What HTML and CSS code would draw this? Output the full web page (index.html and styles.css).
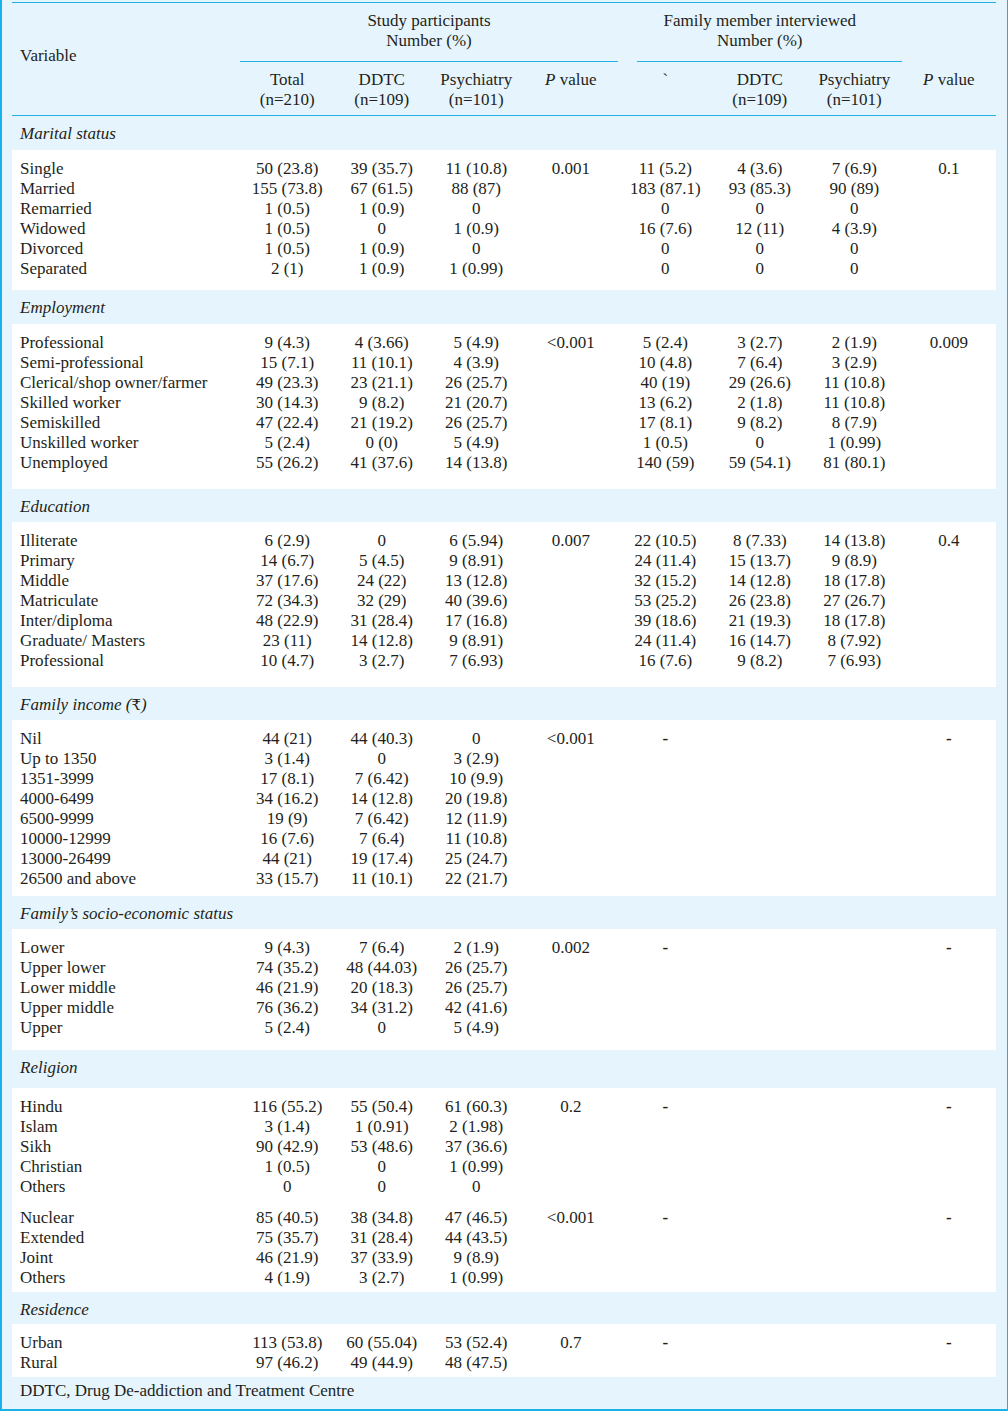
FILE: index.html
```html
<!DOCTYPE html>
<html lang="en">
<head>
<meta charset="utf-8">
<title>Socio-demographic profile</title>
<link rel="stylesheet" href="styles.css">
</head>
<body>
<div class="frame">
<table class="data">
<colgroup>
<col class="c-var">
<col class="c-num"><col class="c-num"><col class="c-num"><col class="c-num">
<col class="c-num"><col class="c-num"><col class="c-num"><col class="c-num">
</colgroup>
<thead>
<tr class="h1">
<th rowspan="2" class="var-head">Variable</th>
<th colspan="4" class="group study">Study participants<br>Number (%)</th>
<th colspan="3" class="group family">Family member interviewed<br>Number (%)</th>
<th></th>
</tr>
<tr class="h2">
<th>Total<br>(n=210)</th>
<th>DDTC<br>(n=109)</th>
<th>Psychiatry<br>(n=101)</th>
<th><i>P</i> value</th>
<th>`</th>
<th>DDTC<br>(n=109)</th>
<th>Psychiatry<br>(n=101)</th>
<th><i>P</i> value</th>
</tr>
</thead>

<tbody class="sec s-marital">
<tr class="band"><td colspan="9">Marital status</td></tr>
<tr class="first"><td>Single</td><td>50 (23.8)</td><td>39 (35.7)</td><td>11 (10.8)</td><td>0.001</td><td>11 (5.2)</td><td>4 (3.6)</td><td>7 (6.9)</td><td>0.1</td></tr>
<tr><td>Married</td><td>155 (73.8)</td><td>67 (61.5)</td><td>88 (87)</td><td></td><td>183 (87.1)</td><td>93 (85.3)</td><td>90 (89)</td><td></td></tr>
<tr><td>Remarried</td><td>1 (0.5)</td><td>1 (0.9)</td><td>0</td><td></td><td>0</td><td>0</td><td>0</td><td></td></tr>
<tr><td>Widowed</td><td>1 (0.5)</td><td>0</td><td>1 (0.9)</td><td></td><td>16 (7.6)</td><td>12 (11)</td><td>4 (3.9)</td><td></td></tr>
<tr><td>Divorced</td><td>1 (0.5)</td><td>1 (0.9)</td><td>0</td><td></td><td>0</td><td>0</td><td>0</td><td></td></tr>
<tr class="last"><td>Separated</td><td>2 (1)</td><td>1 (0.9)</td><td>1 (0.99)</td><td></td><td>0</td><td>0</td><td>0</td><td></td></tr>
</tbody>

<tbody class="sec s-employment">
<tr class="band"><td colspan="9">Employment</td></tr>
<tr class="first"><td>Professional</td><td>9 (4.3)</td><td>4 (3.66)</td><td>5 (4.9)</td><td>&lt;0.001</td><td>5 (2.4)</td><td>3 (2.7)</td><td>2 (1.9)</td><td>0.009</td></tr>
<tr><td>Semi-professional</td><td>15 (7.1)</td><td>11 (10.1)</td><td>4 (3.9)</td><td></td><td>10 (4.8)</td><td>7 (6.4)</td><td>3 (2.9)</td><td></td></tr>
<tr><td>Clerical/shop owner/farmer</td><td>49 (23.3)</td><td>23 (21.1)</td><td>26 (25.7)</td><td></td><td>40 (19)</td><td>29 (26.6)</td><td>11 (10.8)</td><td></td></tr>
<tr><td>Skilled worker</td><td>30 (14.3)</td><td>9 (8.2)</td><td>21 (20.7)</td><td></td><td>13 (6.2)</td><td>2 (1.8)</td><td>11 (10.8)</td><td></td></tr>
<tr><td>Semiskilled</td><td>47 (22.4)</td><td>21 (19.2)</td><td>26 (25.7)</td><td></td><td>17 (8.1)</td><td>9 (8.2)</td><td>8 (7.9)</td><td></td></tr>
<tr><td>Unskilled worker</td><td>5 (2.4)</td><td>0 (0)</td><td>5 (4.9)</td><td></td><td>1 (0.5)</td><td>0</td><td>1 (0.99)</td><td></td></tr>
<tr class="last"><td>Unemployed</td><td>55 (26.2)</td><td>41 (37.6)</td><td>14 (13.8)</td><td></td><td>140 (59)</td><td>59 (54.1)</td><td>81 (80.1)</td><td></td></tr>
</tbody>

<tbody class="sec s-education">
<tr class="band"><td colspan="9">Education</td></tr>
<tr class="first"><td>Illiterate</td><td>6 (2.9)</td><td>0</td><td>6 (5.94)</td><td>0.007</td><td>22 (10.5)</td><td>8 (7.33)</td><td>14 (13.8)</td><td>0.4</td></tr>
<tr><td>Primary</td><td>14 (6.7)</td><td>5 (4.5)</td><td>9 (8.91)</td><td></td><td>24 (11.4)</td><td>15 (13.7)</td><td>9 (8.9)</td><td></td></tr>
<tr><td>Middle</td><td>37 (17.6)</td><td>24 (22)</td><td>13 (12.8)</td><td></td><td>32 (15.2)</td><td>14 (12.8)</td><td>18 (17.8)</td><td></td></tr>
<tr><td>Matriculate</td><td>72 (34.3)</td><td>32 (29)</td><td>40 (39.6)</td><td></td><td>53 (25.2)</td><td>26 (23.8)</td><td>27 (26.7)</td><td></td></tr>
<tr><td>Inter/diploma</td><td>48 (22.9)</td><td>31 (28.4)</td><td>17 (16.8)</td><td></td><td>39 (18.6)</td><td>21 (19.3)</td><td>18 (17.8)</td><td></td></tr>
<tr><td>Graduate/ Masters</td><td>23 (11)</td><td>14 (12.8)</td><td>9 (8.91)</td><td></td><td>24 (11.4)</td><td>16 (14.7)</td><td>8 (7.92)</td><td></td></tr>
<tr class="last"><td>Professional</td><td>10 (4.7)</td><td>3 (2.7)</td><td>7 (6.93)</td><td></td><td>16 (7.6)</td><td>9 (8.2)</td><td>7 (6.93)</td><td></td></tr>
</tbody>

<tbody class="sec s-income">
<tr class="band"><td colspan="9">Family income (<span class="up">₹</span>)</td></tr>
<tr class="first"><td>Nil</td><td>44 (21)</td><td>44 (40.3)</td><td>0</td><td>&lt;0.001</td><td class="dash">-</td><td></td><td></td><td class="dash">-</td></tr>
<tr><td>Up to 1350</td><td>3 (1.4)</td><td>0</td><td>3 (2.9)</td><td></td><td></td><td></td><td></td><td></td></tr>
<tr><td>1351-3999</td><td>17 (8.1)</td><td>7 (6.42)</td><td>10 (9.9)</td><td></td><td></td><td></td><td></td><td></td></tr>
<tr><td>4000-6499</td><td>34 (16.2)</td><td>14 (12.8)</td><td>20 (19.8)</td><td></td><td></td><td></td><td></td><td></td></tr>
<tr><td>6500-9999</td><td>19 (9)</td><td>7 (6.42)</td><td>12 (11.9)</td><td></td><td></td><td></td><td></td><td></td></tr>
<tr><td>10000-12999</td><td>16 (7.6)</td><td>7 (6.4)</td><td>11 (10.8)</td><td></td><td></td><td></td><td></td><td></td></tr>
<tr><td>13000-26499</td><td>44 (21)</td><td>19 (17.4)</td><td>25 (24.7)</td><td></td><td></td><td></td><td></td><td></td></tr>
<tr class="last"><td>26500 and above</td><td>33 (15.7)</td><td>11 (10.1)</td><td>22 (21.7)</td><td></td><td></td><td></td><td></td><td></td></tr>
</tbody>

<tbody class="sec s-ses">
<tr class="band"><td colspan="9">Family’s socio-economic status</td></tr>
<tr class="first"><td>Lower</td><td>9 (4.3)</td><td>7 (6.4)</td><td>2 (1.9)</td><td>0.002</td><td class="dash">-</td><td></td><td></td><td class="dash">-</td></tr>
<tr><td>Upper lower</td><td>74 (35.2)</td><td>48 (44.03)</td><td>26 (25.7)</td><td></td><td></td><td></td><td></td><td></td></tr>
<tr><td>Lower middle</td><td>46 (21.9)</td><td>20 (18.3)</td><td>26 (25.7)</td><td></td><td></td><td></td><td></td><td></td></tr>
<tr><td>Upper middle</td><td>76 (36.2)</td><td>34 (31.2)</td><td>42 (41.6)</td><td></td><td></td><td></td><td></td><td></td></tr>
<tr class="last"><td>Upper</td><td>5 (2.4)</td><td>0</td><td>5 (4.9)</td><td></td><td></td><td></td><td></td><td></td></tr>
</tbody>

<tbody class="sec s-religion">
<tr class="band"><td colspan="9">Religion</td></tr>
<tr class="first"><td>Hindu</td><td>116 (55.2)</td><td>55 (50.4)</td><td>61 (60.3)</td><td>0.2</td><td class="dash">-</td><td></td><td></td><td class="dash">-</td></tr>
<tr><td>Islam</td><td>3 (1.4)</td><td>1 (0.91)</td><td>2 (1.98)</td><td></td><td></td><td></td><td></td><td></td></tr>
<tr><td>Sikh</td><td>90 (42.9)</td><td>53 (48.6)</td><td>37 (36.6)</td><td></td><td></td><td></td><td></td><td></td></tr>
<tr><td>Christian</td><td>1 (0.5)</td><td>0</td><td>1 (0.99)</td><td></td><td></td><td></td><td></td><td></td></tr>
<tr><td>Others</td><td>0</td><td>0</td><td>0</td><td></td><td></td><td></td><td></td><td></td></tr>
<tr class="spacer"><td colspan="9"></td></tr>
<tr><td>Nuclear</td><td>85 (40.5)</td><td>38 (34.8)</td><td>47 (46.5)</td><td>&lt;0.001</td><td class="dash">-</td><td></td><td></td><td class="dash">-</td></tr>
<tr><td>Extended</td><td>75 (35.7)</td><td>31 (28.4)</td><td>44 (43.5)</td><td></td><td></td><td></td><td></td><td></td></tr>
<tr><td>Joint</td><td>46 (21.9)</td><td>37 (33.9)</td><td>9 (8.9)</td><td></td><td></td><td></td><td></td><td></td></tr>
<tr class="last"><td>Others</td><td>4 (1.9)</td><td>3 (2.7)</td><td>1 (0.99)</td><td></td><td></td><td></td><td></td><td></td></tr>
</tbody>

<tbody class="sec s-residence">
<tr class="band"><td colspan="9">Residence</td></tr>
<tr class="first"><td>Urban</td><td>113 (53.8)</td><td>60 (55.04)</td><td>53 (52.4)</td><td>0.7</td><td class="dash">-</td><td></td><td></td><td class="dash">-</td></tr>
<tr class="last"><td>Rural</td><td>97 (46.2)</td><td>49 (44.9)</td><td>48 (47.5)</td><td></td><td></td><td></td><td></td><td></td></tr>
</tbody>
</table>
<p class="foot">DDTC, Drug De-addiction and Treatment Centre</p>
</div>
</body>
</html>
```

FILE: styles.css
```css
html, body {
  margin: 0;
  padding: 0;
  background: #ffffff;
}

.frame {
  box-sizing: border-box;
  width: 1008px;
  background: #e6f5fd;
  border-left: 2px solid #1ab0ea;
  border-right: 1px solid #1ab0ea;
  border-bottom: 2px solid #1ab0ea;
  padding: 2px 11px 0 10px;
  font-family: "Liberation Serif", "Times New Roman", serif;
  font-size: 17px;
  line-height: 20px;
  color: #231f20;
}

.data {
  width: 984px;
  table-layout: fixed;
  border-collapse: collapse;
  border-spacing: 0;
  border-top: 1px solid #22b2e8;
}

.c-var { width: 228px; }
.c-num { width: 94.5px; }

.data th {
  font-weight: normal;
  text-align: center;
  vertical-align: top;
  padding: 0;
}

.data thead {
  border-bottom: 1px solid #22b2e8;
}

.h1 th {
  padding: 8px 0 11px;
}

.h2 th {
  padding: 8px 0 5px;
}

.data th.var-head {
  text-align: left;
  vertical-align: middle;
  padding: 0 0 6px 8px;
}

.group.study {
  background: linear-gradient(#22b2e8, #22b2e8) no-repeat left bottom / calc(100% + 2px) 1px;
}

.group.family {
  background: linear-gradient(#22b2e8, #22b2e8) no-repeat right bottom / calc(100% - 19px) 1px;
}

.data td {
  padding: 0;
  text-align: center;
  white-space: nowrap;
  background: #ffffff;
}

.data td:first-child {
  text-align: left;
  padding-left: 8px;
}

.sec { --pb: 12px; --bandpb: 6px; }
.s-marital { --pb: 11px; }
.s-employment { --pb: 16px; }
.s-education { --pb: 16px; --bandpb: 5px; }
.s-income { --pb: 7px; --bandpb: 5px; }
.s-ses { --pb: 12px; --bandpb: 5px; }
.s-religion { --pb: 4px; --bandpb: 10px; }
.s-residence { --pb: 4px; --bandpb: 4px; }

.data tr.band td {
  background: transparent;
  font-style: italic;
  padding-top: 8px;
  padding-bottom: var(--bandpb);
}

.band .up {
  font-style: normal;
  font-family: "DejaVu Serif", "Liberation Serif", serif;
  font-size: 15px;
}

.data tr.first td {
  padding-top: 9px;
}

.data tr.last td {
  padding-bottom: var(--pb);
}

.data tr.spacer td {
  height: 11px;
  line-height: 11px;
}

.data td.dash {
  font-weight: bold;
}

.foot {
  margin: 0;
  padding: 4px 8px 8px;
}
```
